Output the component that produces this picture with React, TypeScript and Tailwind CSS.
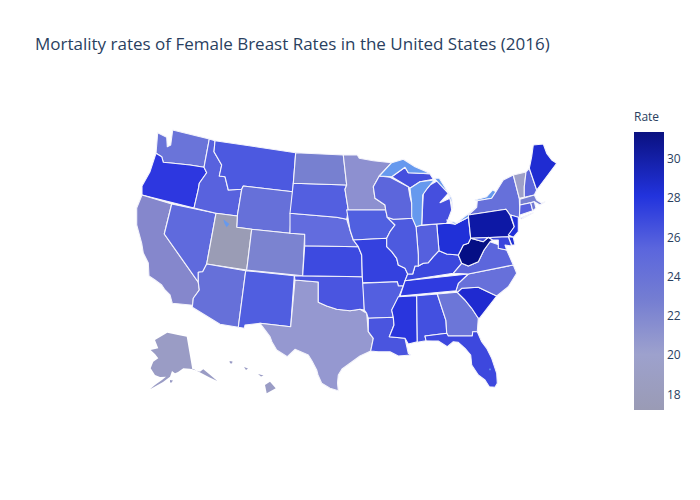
const ticks = ["30", "28", "26", "24", "22", "20", "18"]

const states: [string, string][] = [
  ["#6a74d9", "157.7,132.7 166.7,137.3 167.3,146.7 170.7,145 172.7,130 209.3,139 204,167.3 190,165 173.3,163.3 163.3,162.3 161.7,156.7 156,153.3"],
  ["#2d37e0", "156,153.3 161.7,156.7 163.3,162.3 173.3,163.3 190,165 204,167.3 206.7,172.7 199.3,183.3 198.3,189.3 194,208 142,195 142,186 150,171.7"],
  ["#8587cc", "142,195 171.7,204 164.3,234 198.3,282.3 199.3,290 193.3,298.3 192.7,305.3 172.3,303.3 170,295 165,290 161.7,285 155,280 149,276 148.3,263 143.3,253 141.7,243.3 136.7,225 136.7,208"],
  ["#5f6add", "171.7,204 216,213.3 206.7,264 202.7,271.7 198.3,272.3 198.3,282.3 164.3,234"],
  ["#5862de", "209.3,139 215,140.7 214,151.7 221.7,165 219.3,176 225,176.7 228.3,190 241.7,189.3 237.3,216 216,213.3 194,208 198.3,189.3 199.3,183.3 206.7,172.7 204,167.3"],
  ["#4c59e0", "215,140.7 295.7,152.7 292.7,191.7 243.3,186 241.7,189.3 228.3,190 225,176.7 219.3,176 221.7,165 214,151.7"],
  ["#6670d9", "243.3,186 292.7,191.7 290,233.3 251.7,229.3 236.7,227.3 237.3,216 241.7,189.3"],
  ["#9a9cb5", "216,213.3 237.3,216 236.7,227.3 251.7,229.3 246.7,270 206.7,264"],
  ["#7b83d0", "251.7,229.3 290,233.3 304.7,234.3 302.7,275.7 246.7,270"],
  ["#6670d9", "206.7,264 245.7,270.7 238.3,327.3 220,324.3 192.3,307.3 193.3,298.3 199.3,290 198.3,282.3 198.3,272.3 202.7,271.7"],
  ["#505ee0", "245.7,270.7 294.3,275.7 290.7,326.7 260,323.3 245,325 244.3,328.3 238.3,327.3"],
  ["#9598d0", "295,280 318.3,282 318.3,302.3 326.7,306 336.7,309.3 350,310.7 360,309.3 366.7,313.3 368.3,331.7 373.3,338.3 370.7,351 360,356 350,363.3 342,369 338.3,375 337.5,383 338.3,390.7 330,388.3 321.7,383.3 318,375 316.7,370 312,361 308.3,355 295,349.3 287.3,356.7 276.7,350 272,342 270,336.7 260,323.3 290.7,326.7"],
  ["#4a55e0", "294.3,275.7 362.3,276.7 363.3,283.3 364.3,310 360,309.3 350,310.7 336.7,309.3 326.7,306 318.3,302.3 318.3,282 295,280"],
  ["#3d4ae0", "304.7,245.7 358.3,246.7 361.7,255 362.3,276.7 302.7,275.7"],
  ["#626cde", "290,213.3 336.7,217.3 346.7,219.3 350,230 353.3,240 358.3,246.7 304.7,245.7 304.7,234.3 290,233.3"],
  ["#535fe0", "293.3,183.3 346.7,185 345,189.3 348.3,210 346.7,219.3 336.7,217.3 290,213.3"],
  ["#7780d0", "295.7,152.7 343.3,155 346.7,185 293.3,183.3"],
  ["#8d90d0", "343.3,155 357.3,155 359.3,158.3 373.3,160.7 391.7,162.7 379.3,176 373.3,186.7 375,198.3 385,205 385.7,210 346.7,210 348.3,210 345,189.3 346.7,185"],
  ["#5060e0", "346.7,210 385.7,210 387.3,217.3 395,225 390,231.7 386.7,238.3 353.3,240 350,230"],
  ["#3441df", "353.3,240 386.7,238.3 386.7,246.7 391.7,251.7 396.7,258.3 398.3,265 405,268.3 407.7,274 403.3,286 398.3,286 397.3,281.7 362.7,282.7 362.3,276.7 361.7,255 358.3,246.7"],
  ["#535fe0", "362.7,283.3 397.3,281.7 398.3,286 403.3,286 398.3,298.3 391.7,310 393.3,317.3 368.3,318.3 366.7,313.3 364.3,310"],
  ["#4a55df", "368.3,318.3 393.3,317.3 394,325 389.3,336.7 405,338.3 408.3,353.3 410.7,355 398.3,356 390,351.7 378.3,351.7 370.7,351 373.3,338.3 368.3,331.7"],
  ["#2935dd", "398.3,296.7 416.7,295.7 417.3,341.7 408.3,344 405,338.3 389.3,336.7 394,325 393.3,317.3 391.7,310"],
  ["#4350e0", "416.7,295.7 437.3,294 446,320.7 446.7,333.3 425,336 426,340.7 417.3,342.3"],
  ["#6c76d8", "437.3,294 457.3,292.3 465,300 471.7,308.3 478.3,318.3 477.3,331.7 472.7,331.7 472.3,336 448.3,336 446.7,333.3 446,320.7"],
  ["#1f2ad0", "457.3,292.3 461.7,288.3 478.3,287.3 496.7,296 480,317.7 478.3,318.3 471.7,308.3 465,300"],
  ["#6770da", "468.3,274 513.3,265 516.7,273.3 508.3,286.7 496.7,296 478.3,287.3 461.7,288.3 457.3,292.3 456,290.7 458.3,283.3"],
  ["#2f3be0", "405,280.7 468.3,274 458.3,283.3 456,290.7 400,296 403.3,286"],
  ["#3b48de", "407.7,274 412.7,274 415,266 418.3,266 423.3,263.3 428.3,262.7 433.3,256.7 439,250.7 446.7,254 458.3,255 461.7,263.3 453.3,273.3 405,280.7"],
  ["#5c66dc", "453.3,273.3 461.7,263.3 468.3,266 478.3,261.7 484,250 490,241.7 499.3,245 498.3,248.3 506.7,250 513.3,265 468.3,274"],
  ["#050f85", "458.3,255 463.3,245 468.3,243.3 470.7,238.3 483.3,241.7 488.3,237.3 492.7,240 490,241.7 484,250 478.3,261.7 468.3,266 461.7,263.3"],
  ["#2030d8", "436.7,224 448.3,223.3 455,224.3 468.3,217.3 470.7,238.3 468.3,243.3 463.3,245 458.3,255 446.7,254 439,250.7"],
  ["#5560de", "416,226 436.7,224 439,250.7 433.3,256.7 428.3,262.7 423.3,263.3 418.3,266 418.3,255"],
  ["#4d5adf", "393.3,219.3 413.3,218.3 416,226 418.3,255 418.3,266 415,266 412.7,274 407.7,274 405,268.3 398.3,265 396.7,258.3 391.7,251.7 386.7,246.7 386.7,238.3 390,231.7 395,225 387.3,217.3"],
  ["#5c66dc", "373.3,186.7 379.3,176 390,177.3 408.3,186.7 410,196.7 411.7,203.3 413.3,218.3 393.3,219.3 387.3,217.3 385.7,210 385,205 375,198.3"],
  ["#454fde", "391.7,176.7 405,167.3 408.3,172.7 420,173.3 430,174 433.3,179.3 420,181.7 410,188.3 408.3,186.7"],
  ["#454fde", "421.7,225 423.3,193.3 430,185 438.7,180 448.3,193.3 440,202.7 450,198.3 451.7,210 446.7,223.3"],
  ["#6699ee", "379.3,176 391.7,162.7 403.3,159.3 415,166.7 430,173.3 420,173.3 408.3,172.7 405,167.3 391.7,176.7"],
  ["#6699ee", "420,181.7 434.3,180 427.3,188.3 422.7,195 421.7,225 416,226.7 411.7,216.7 411.7,203.3 410.7,195 410,188.3"],
  ["#6699ee", "434.3,178.3 439.3,178.3 451.7,198.3 452.7,208.3 450,198.3 448.3,193.3"],
  ["#6699ee", "446.7,220 456.7,222.7 476.7,207.3 468.3,217.3 455,224.3"],
  ["#6699ee", "475,200 486.7,196.7 492.7,190 496,191.7 491.7,198.3 477.3,200.7"],
  ["#6670da", "468.3,215 476.7,207.3 477.3,200.7 491.7,198.3 496,191.7 503.3,180 513.3,175 519.3,198.3 520,218 516.7,216.7 510,215 506,209.3"],
  ["#0d18a5", "468.3,215 506,209.3 510,215 514.3,226.7 508.3,236.7 470.7,238.3"],
  ["#2030da", "510.7,215 518.3,217.3 518.3,231.7 513.3,237.3 508.3,235 514.3,226.7"],
  ["#2030d5", "508.3,236.7 513.3,237.3 515,245 511.7,245"],
  ["#3a45dd", "470.7,238.3 508.3,236.7 511.7,246 505,245 506.7,250 498.3,248.3 498.3,240 492.7,240 488.3,237.3 483.3,241.7"],
  ["#9ea0c8", "513.3,175 526,172 524.3,186.7 524.3,197.3 519.3,198.3"],
  ["#5c66dc", "526,172 529.3,168.3 536.7,190 534.3,195 524.3,197.3 524.3,186.7"],
  ["#1f2cd2", "529.3,168.3 531.7,156.7 533.3,145 543.3,144 546.7,153.3 551.7,160 556.7,163.3 536.7,190"],
  ["#7780d0", "520,199.3 534.3,195 536.7,200 541.7,203.3 545,201.7 540,205 534.3,201.7 520,205"],
  ["#5860de", "520,205 530.7,202.7 532.7,210.7 520,215 519.3,217.3"],
  ["#7078d4", "530.7,202.7 534.3,201.7 536,208.3 532.7,210.7"],
  ["#5860de", "520,218.3 533.3,212.7 521.7,219"],
  ["#3d48de", "425,336 446.7,333.3 448.3,336 472.3,336 472.7,331.7 477.3,331.7 481.7,341.7 486.7,348.3 491.7,358.3 496.7,373.3 497.3,383.3 495,387.3 489.3,386.7 485,380 478.3,375 471.7,365 470.7,355 465,348.3 458.3,342.3 453.3,341.7 447.3,346.7 438.3,341 433.3,341 426,340.7"],
]

const alaska = "167.3,332.7 178,335 186.7,336.7 192.3,369.3 200,371.7 203.3,369.3 209,374 217.3,381 209.3,377.3 201.7,373.3 193.3,369 183.3,368.3 178,372 175,373.3 172,371 170,376.7 163,382 150,389.3 155,385 162,380 166,376.7 160,377 155,375 150.7,368.3 153.3,361.7 158.3,358.3 155,354 150.7,350 158.3,348.3 155,340"

function UsMap() {
  return (
    <svg viewBox="130 125 430 275" className="h-[275px] w-[430px] shrink-0">
      <g stroke="#f4f4fb" strokeWidth="1.1" strokeLinejoin="round">
        {states.map(([fill, points], i) => (
          <polygon key={i} fill={fill} points={points} />
        ))}
      </g>
      <polygon fill="#6699ee" points="223.3,219.3 229.3,224 226.7,227.3 224.3,223.3" />
      <rect x="489.2" y="368.6" width="1.6" height="1.6" fill="#6699ee" />
      <g fill="#9a9cc5">
        <polygon points={alaska} />
        <polygon points="265,385 270,381.7 275.7,388.3 266.7,393.3" />
        <polygon points="229.5,361 232.5,361.5 232,363.5 230,363.2" />
        <polygon points="244,367 248,368.5 246,370" />
        <polygon points="258,374 263.5,375.5 261,376.5" />
        <polygon points="170,380 173,380.5 171,383 170,382" />
      </g>
    </svg>
  )
}

export default function App() {
  return (
    <div className="h-[500px] w-[700px] overflow-hidden bg-white font-['Open_Sans',sans-serif] text-[#2a3f5f]">
      <h1 className="pl-[35px] pt-[32px] text-[17px] leading-[24px]">
        Mortality rates of Female Breast Rates in the United States (2016)
      </h1>
      <div className="mt-[52px] flex pl-[130px]">
        <div className="mt-[17px]">
          <UsMap />
        </div>
        <div className="ml-[74px] w-[66px]">
          <div className="h-[18px] text-[12px] leading-[18px]">Rate</div>
          <div className="mt-[6px] flex">
            <div className="h-[278px] w-[30px] bg-[linear-gradient(to_bottom,#0a1180_0%,#2233dd_23%,#5b66dd_42%,#747dd2_60%,#9da1cd_80%,#9a9bb5_100%)]" />
            <div className="pl-[3px] pt-[7.5px]">
              {ticks.map((tick) => (
                <div key={tick} className="flex h-[39.25px] items-center text-[12px]">
                  {tick}
                </div>
              ))}
            </div>
          </div>
        </div>
      </div>
    </div>
  )
}
